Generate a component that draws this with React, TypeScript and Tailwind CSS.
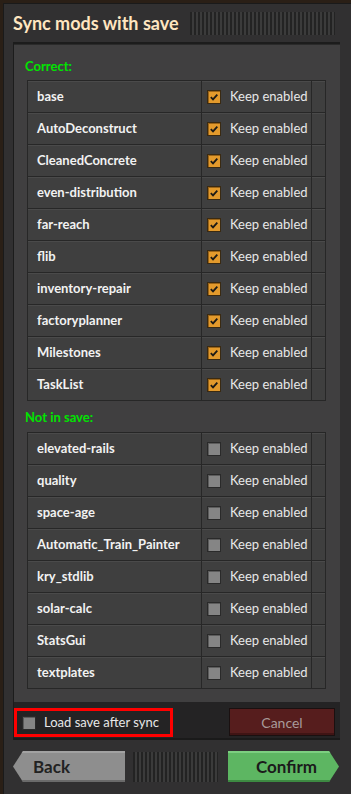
import React from "react";

const correct = [
  "base",
  "AutoDeconstruct",
  "CleanedConcrete",
  "even-distribution",
  "far-reach",
  "flib",
  "inventory-repair",
  "factoryplanner",
  "Milestones",
  "TaskList",
];
const notInSave = [
  "elevated-rails",
  "quality",
  "space-age",
  "Automatic_Train_Painter",
  "kry_stdlib",
  "solar-calc",
  "StatsGui",
  "textplates",
];

function CheckBox({ checked }: { checked: boolean }) {
  if (checked) {
    return (
      <div className="w-[14px] h-[14px] bg-[#e39a2c] border border-[#3a2a12] shadow-[inset_1px_1px_0_#9a6418] flex items-center justify-center">
        <svg width="10" height="10" viewBox="0 0 10 10">
          <path d="M1.8 5.2 L4 7.4 L8.3 2.6" fill="none" stroke="#1c1a16" strokeWidth="1.8" />
        </svg>
      </div>
    );
  }
  return (
    <div className="w-[14px] h-[14px] bg-[#858585] border border-[#2a2a2a] shadow-[inset_1px_1px_0_#5c5c5c]" />
  );
}

function Table({ items, checked }: { items: string[]; checked: boolean }) {
  return (
    <div className="ml-[13px] w-[299px] flex flex-col border-t border-[#262626]">
      {items.map((n) => (
        <div key={n} className="flex h-[32px]">
          <div className="w-[175px] h-full bg-[#3f3f3f] border-l border-r border-b border-[#272727] shadow-[inset_0_1px_0_#4a4a4a] flex items-center pl-[9px] text-[13px] font-bold text-[#f2f2f2]">
            {n}
          </div>
          <div className="w-[110px] h-full bg-[#3f3f3f] border-r border-b border-[#272727] shadow-[inset_0_1px_0_#4a4a4a] flex items-center pl-[5px] gap-[9px]">
            <CheckBox checked={checked} />
            <span className="text-[13px] text-[#e8e8e8]">Keep enabled</span>
          </div>
          <div className="w-[14px] h-full bg-[#3f3f3f] border-r border-b border-[#272727] shadow-[inset_0_1px_0_#4a4a4a]" />
        </div>
      ))}
    </div>
  );
}

export default function App() {
  return (
    <div
      className="w-[351px] h-[794px] bg-[#2a1f16] pt-[3px] pl-[3px] overflow-hidden"
      style={{ fontFamily: "Lato, 'Noto Sans', sans-serif" }}
    >
      <div className="h-[791px] bg-[#313031] border-l border-t border-[#1a1a1a] flex flex-col pl-[9px] pr-[11px]">
        <div className="h-[38px] flex items-center">
          <span className="text-[18px] font-bold text-[#ffe6c0] leading-none">Sync mods with save</span>
          <div className="ml-auto mr-[5px] w-[145px] h-[23px] bg-[repeating-linear-gradient(90deg,#232323_0px,#232323_2px,#3b3b3b_2px,#3b3b3b_4px)]" />
        </div>
        <div className="bg-[#403f40] border-t-2 border-l border-[#1c1c1c] shadow-[inset_0_1px_0_#2a2a2a] flex flex-col">
          <div className="pt-[14px] pl-[11px] h-[30px] text-[13px] font-bold text-[#00e400] leading-[16px]">Correct:</div>
          <div className="mt-[6px]"><Table items={correct} checked={true} /></div>
          <div className="mt-[8px] pl-[11px] h-[16px] text-[13px] font-bold text-[#00e400] leading-[16px]">Not in save:</div>
          <div className="mt-[7px]"><Table items={notInSave} checked={false} /></div>
          <div className="h-[13px]" />
          <div className="h-[38px] bg-[#242324] border-b-2 border-[#1a1a1a] flex items-start pt-[6px]">
            <div className="w-[159px] h-[29px] border-[3px] border-[#ff0000] flex items-center pl-[5px] gap-[8px]">
              <CheckBox checked={false} />
              <span className="text-[13px] text-[#e8e8e8]">Load save after sync</span>
            </div>
            <div className="ml-auto mr-[5px] w-[106px] h-[28px] bg-[#561d1d] border border-[#1a1010] shadow-[inset_0_-2px_0_#3f1414] flex items-center justify-center text-[14px] text-[#a89a9a]">
              Cancel
            </div>
          </div>
        </div>
        <div className="mt-[11px] h-[31px] flex items-center">
          <div className="w-[112px] h-[31px] bg-[#8e8e8e] shadow-[inset_0_2px_0_#a2a2a2,inset_0_-2px_0_#6a6a6a] [clip-path:polygon(10px_0,100%_0,100%_100%,10px_100%,0_50%)] flex items-center pl-[20px] text-[17px] font-bold text-[#222222]">
            Back
          </div>
          <div className="ml-[8px] w-[85px] h-[30px] bg-[repeating-linear-gradient(90deg,#232323_0px,#232323_2px,#3b3b3b_2px,#3b3b3b_4px)]" />
          <div className="ml-[10px] w-[111px] h-[31px] bg-[#5db662] shadow-[inset_0_2px_0_#7ccf80,inset_0_-2px_0_#3d8a42] [clip-path:polygon(0_0,calc(100%-10px)_0,100%_50%,calc(100%-10px)_100%,0_100%)] flex items-center pl-[28px] text-[17px] font-bold text-[#1b1b1b]">
            Confirm
          </div>
        </div>
      </div>
    </div>
  );
}
